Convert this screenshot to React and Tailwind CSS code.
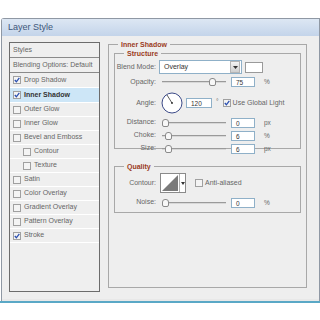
import React from 'react';

const font = { fontFamily: '"Liberation Sans", Arial, sans-serif' };

const Check = ({ checked }) => (
    <span className="w-[8px] h-[8px] border border-[#a0a0a0] bg-[#f4f4f4] flex items-center justify-center shrink-0">
        {checked && (
            <svg width="6" height="6" viewBox="0 0 6 6">
                <path d="M0.8 3 L2.4 4.8 L5.3 0.9" fill="none" stroke="#2a4fb0" strokeWidth="1.3" />
            </svg>
        )}
    </span>
);

const styles = [
    { label: 'Drop Shadow', checked: true, h: 'h-[15px]' },
    { label: 'Inner Shadow', checked: true, h: 'h-[15px]', active: true },
    { label: 'Outer Glow' },
    { label: 'Inner Glow' },
    { label: 'Bevel and Emboss' },
    { label: 'Contour', indent: true },
    { label: 'Texture', indent: true },
    { label: 'Satin' },
    { label: 'Color Overlay' },
    { label: 'Gradient Overlay' },
    { label: 'Pattern Overlay' },
    { label: 'Stroke', checked: true },
];

const Slider = ({ pos }) => (
    <div className="relative ml-[3px] w-[64px] h-[10px] flex items-center">
        <div className="w-full h-[2px] border-t border-[#9a9a9a] border-b-white bg-[#d8d8d8]" />
        <span
            className="absolute top-[1px] w-[7px] h-[8px] rounded-t-[3px] rounded-b-[2px] border border-[#8a8a8a] bg-[#f8f8f8]"
            style={{ left: pos }}
        />
    </div>
);

const Field = ({ value, unit, w = 'w-[24px]' }) => (
    <>
        <span className={`${w} h-[10px] border border-[#8fb0c8] bg-white pl-[4px] text-[6.5px] leading-[9px] text-[#333]`}>{value}</span>
        <span className="ml-[9px] text-[6.5px] text-[#666]">{unit}</span>
    </>
);

const Row = ({ label, children, cls = 'h-[13px]' }) => (
    <div className={`flex items-center ${cls}`}>
        <span className="w-[44px] text-right pr-[3px] text-[7px] text-[#666]">{label}</span>
        {children}
    </div>
);

export default function App() {
    return (
        <div className="w-[320px] h-[320px] bg-white overflow-hidden" style={font}>
            <div className="mt-[18px] ml-[1px] h-[283px] border border-[#8f98a4] border-b-0 rounded-tl-[3px] bg-[#eeeeee] flex flex-col">
                <div className="h-[17px] bg-gradient-to-b from-[#dde7f3] to-[#c3d4ea] flex items-center pl-[6px] text-[9px] text-[#3e5779]">
                    Layer Style
                </div>
                <div className="flex flex-1 pt-[6px]">
                    <div className="ml-[7px] w-[91px] h-[250px] border border-[#6c6c6c] bg-[#efefef] flex flex-col text-[7px] text-[#666]">
                        <div className="h-[15px] border-b border-[#8a8a8a] flex items-center pl-[3px]">Styles</div>
                        <div className="h-[15px] border-b border-[#8a8a8a] flex items-center pl-[3px]">Blending Options: Default</div>
                        {styles.map(s => (
                            <div
                                key={s.label}
                                className={`${s.h || 'h-[14px]'} border-b border-white flex items-center gap-[3px] ${s.indent ? 'pl-[13px]' : 'pl-[3px]'} ${s.active ? 'bg-[#cde6f7] font-bold text-[#333]' : ''}`}
                            >
                                <Check checked={s.checked} />
                                <span>{s.label}</span>
                            </div>
                        ))}
                    </div>

                    <fieldset className="ml-[8px] mt-[-2px] w-[199px] h-[248px] border border-[#a8a8a8] px-[5px]">
                        <legend className="ml-[4px] px-[3px] text-[7px] font-bold text-[#9b3c1d] leading-[9px]">Inner Shadow</legend>

                        <fieldset className="border border-[#a8a8a8] h-[100px] pl-[0px]">
                            <legend className="ml-[9px] px-[3px] text-[7px] font-bold text-[#9b3c1d] leading-[9px]">Structure</legend>
                            <Row label="Blend Mode:" cls="h-[14px] mt-[2px]">
                                <div className="w-[83px] h-[14px] border border-[#8fb0c8] bg-white flex items-center">
                                    <span className="flex-1 pl-[4px] text-[7px] text-[#333]">Overlay</span>
                                    <span className="w-[10px] h-[12px] mr-[1px] bg-gradient-to-b from-[#f4f4f4] to-[#cfcfcf] border border-[#b5b5b5] flex items-center justify-center">
                                        <svg width="5" height="3" viewBox="0 0 5 3"><path d="M0 0 H5 L2.5 3 Z" fill="#333" /></svg>
                                    </span>
                                </div>
                                <span className="ml-[3px] w-[18px] h-[11px] border border-[#9a9a9a] bg-white" />
                            </Row>
                            <Row label="Opacity:" cls="h-[10px] mt-[3px]">
                                <Slider pos="47px" />
                                <span className="ml-[5px] flex items-center"><Field value="75" unit="%" /></span>
                            </Row>
                            <Row label="Angle:" cls="h-[22px] mt-[5px]">
                                <svg width="22" height="22" viewBox="0 0 22 22" className="ml-[2px]">
                                    <circle cx="11" cy="11" r="10" fill="#fff" stroke="#3c4a88" strokeWidth="1" />
                                    <line x1="11" y1="11" x2="6" y2="3" stroke="#333" strokeWidth="0.8" />
                                    <circle cx="11" cy="11" r="0.9" fill="#222" />
                                </svg>
                                <span className="ml-[3px] w-[26px] h-[10px] border border-[#8fb0c8] bg-white pl-[4px] text-[6.5px] leading-[9px] text-[#333]">120</span>
                                <span className="ml-[4px] text-[6.5px] text-[#666] self-start mt-[5px]">°</span>
                                <span className="ml-[4px] flex items-center gap-[2px] text-[7px] text-[#666]">
                                    <Check checked />
                                    Use Global Light
                                </span>
                            </Row>
                            <Row label="Distance:" cls="h-[13px] mt-[2px]">
                                <Slider pos="0px" />
                                <span className="ml-[5px] flex items-center"><Field value="0" unit="px" /></span>
                            </Row>
                            <Row label="Choke:">
                                <Slider pos="3px" />
                                <span className="ml-[5px] flex items-center"><Field value="6" unit="%" /></span>
                            </Row>
                            <Row label="Size:">
                                <Slider pos="3px" />
                                <span className="ml-[5px] flex items-center"><Field value="6" unit="px" /></span>
                            </Row>
                        </fieldset>

                        <fieldset className="mt-[13px] border border-[#a8a8a8] h-[51px]">
                            <legend className="ml-[9px] px-[3px] text-[7px] font-bold text-[#9b3c1d] leading-[9px]">Quality</legend>
                            <Row label="Contour:" cls="h-[20px] mt-[2px]">
                                <div className="ml-[1px] w-[26px] h-[20px] border border-[#8a8a8a] bg-white flex">
                                    <svg width="18" height="18" viewBox="0 0 18 18">
                                        <path d="M1 17 L17 1 L17 17 Z" fill="#7a7a7a" />
                                    </svg>
                                    <span className="flex-1 border-l border-[#b0b0b0] flex items-center justify-center">
                                        <svg width="4" height="3" viewBox="0 0 4 3"><path d="M0 0 H4 L2 3 Z" fill="#333" /></svg>
                                    </span>
                                </div>
                                <span className="ml-[9px] flex items-center gap-[2px] text-[7px] text-[#666]">
                                    <Check />
                                    Anti-aliased
                                </span>
                            </Row>
                            <Row label="Noise:" cls="h-[13px] mt-[3px]">
                                <Slider pos="0px" />
                                <span className="ml-[5px] flex items-center"><Field value="0" unit="%" /></span>
                            </Row>
                        </fieldset>
                    </fieldset>
                </div>
                <div className="h-[2px] bg-[#e8e8e8]" />
            </div>
            <div className="h-[2px] bg-[#5aa8c6]" />
        </div>
    );
}
